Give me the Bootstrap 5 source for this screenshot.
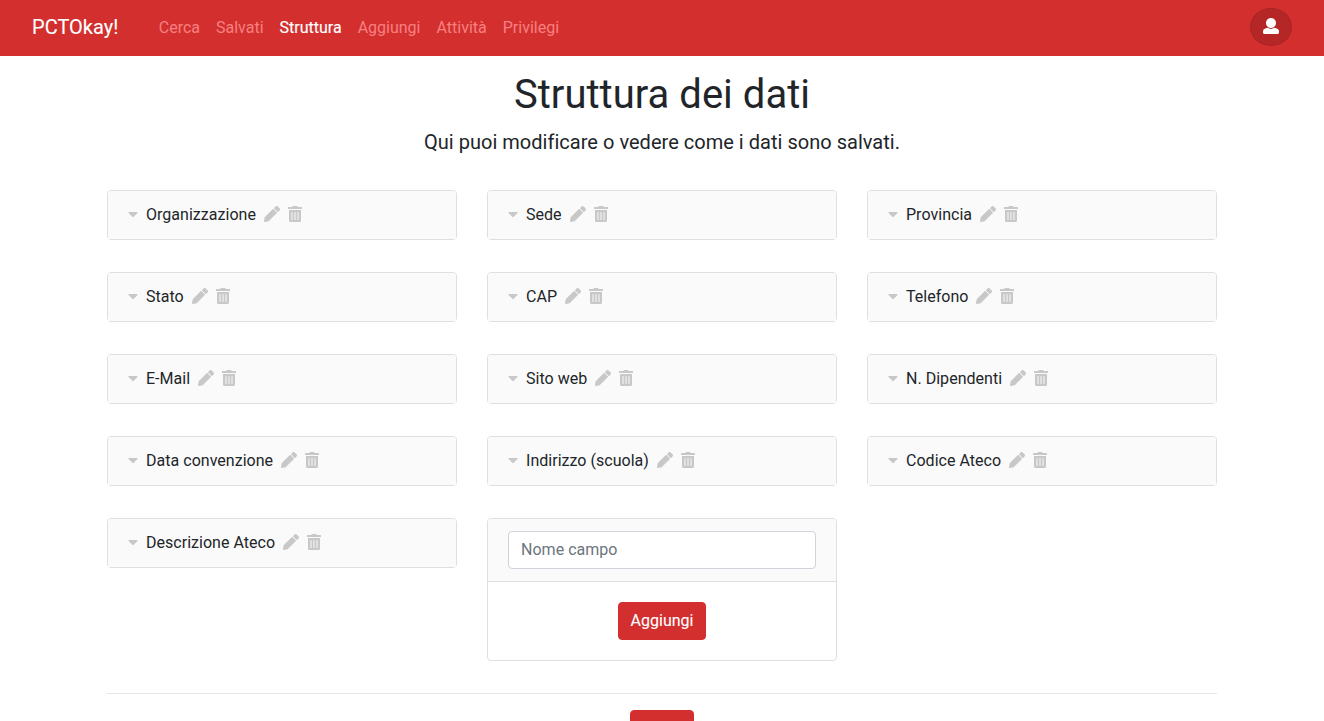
<!DOCTYPE html>
<html lang="it">
<head>
<meta charset="utf-8">
<meta name="viewport" content="width=device-width, initial-scale=1">
<title>PCTOkay! - Struttura</title>
<link href="https://cdn.jsdelivr.net/npm/bootstrap@5.3.0/dist/css/bootstrap.min.css" rel="stylesheet">
<style>
body { font-family: Roboto, sans-serif; color: #212529; letter-spacing: .025px; overflow: hidden; }
.topbar { --bs-navbar-nav-link-padding-x: .5rem; background: #d32f2f; height: 56px; }
.topbar .nav-link { color: #f88080; letter-spacing: 0; }
.topbar .nav-link.active { color: #fff; -webkit-text-stroke: .15px #fff; }
.topbar .navbar-brand { margin-right: 32.3px; padding: 4px 0 6px; -webkit-text-stroke: .1px #fff; }
.btn-red { --bs-btn-color: #fff; --bs-btn-bg: #d32f2f; --bs-btn-border-color: #d32f2f; --bs-btn-hover-color: #fff; --bs-btn-hover-bg: #b52626; --bs-btn-hover-border-color: #ab2424; --bs-btn-border-radius: 4px; -webkit-text-stroke: .1px #fff; }
.btn-user { --bs-btn-bg: #b52626; --bs-btn-border-color: #ab2424; height: 38px; padding: 5px 12px 7px; margin-top: -2px; }
.page, .page .row { --bs-gutter-x: 30px; }
.page { padding-top: 15px; }
.intro { margin-bottom: 17px; }
.field-card { --bs-card-border-color: #dfdfdf; --bs-card-border-radius: 4px; --bs-card-inner-border-radius: 3px; --bs-card-cap-bg: #fafafa; --bs-card-cap-padding-y: 12px; --bs-card-cap-padding-x: 20px; --bs-card-spacer-x: 20px; --bs-card-spacer-y: 20px; }
.field-card .card-header:last-child { border-bottom: 0; }
.field-card .form-control { border-color: #ced4da; border-radius: 4px; letter-spacing: inherit; }
.field-card .form-control::placeholder { color: #6c757d; opacity: 1; }
.fa { height: 16px; fill: currentColor; display: block; flex: none; }
.soft { color: #c8c8c8; margin-bottom: 2px; }
.divider { border-top: 1px solid #e5e5e5; opacity: 1; }
</style>
</head>
<body>
<svg class="d-none" aria-hidden="true">
<symbol id="caret" viewBox="0 0 320 512"><path d="M31.3 192h257.3c17.8 0 26.7 21.5 14.1 34.1L174.1 354.7c-7.8 7.8-20.5 7.8-28.3 0L17.2 226.1C4.6 213.5 13.5 192 31.3 192z"/></symbol>
<symbol id="pencil" viewBox="0 0 512 512"><path d="M497.9 142.1l-46.1 46.1c-4.7 4.7-12.3 4.7-17 0l-111-111c-4.7-4.7-4.7-12.3 0-17l46.1-46.1c18.7-18.7 49.1-18.7 67.9 0l60.1 60.1c18.8 18.7 18.8 49.1 0 67.9zM284.2 99.8L21.6 362.4.4 483.9c-2.9 16.4 11.4 30.6 27.8 27.8l121.5-21.3 262.6-262.6c4.7-4.7 4.7-12.3 0-17l-111-111c-4.8-4.7-12.4-4.7-17.1 0z"/></symbol>
<symbol id="trash" viewBox="0 0 448 512"><path d="M32 464a48 48 0 0 0 48 48h288a48 48 0 0 0 48-48V128H32zm272-256a16 16 0 0 1 32 0v224a16 16 0 0 1-32 0zm-96 0a16 16 0 0 1 32 0v224a16 16 0 0 1-32 0zm-96 0a16 16 0 0 1 32 0v224a16 16 0 0 1-32 0zM432 32H312l-9.4-18.7A24 24 0 0 0 281.1 0H166.8a23.72 23.72 0 0 0-21.4 13.3L136 32H16A16 16 0 0 0 0 48v32a16 16 0 0 0 16 16h416a16 16 0 0 0 16-16V48a16 16 0 0 0-16-16z"/></symbol>
<symbol id="user" viewBox="0 0 512 512"><path d="M256 0c88.366 0 160 71.634 160 160s-71.634 160-160 160S96 248.366 96 160 167.634 0 256 0zm183.283 333.821l-71.313-17.828c-74.923 53.89-165.738 41.864-223.94 0l-71.313 17.828C29.981 344.505 0 382.903 0 426.955V464c0 26.51 21.49 48 48 48h416c26.51 0 48-21.49 48-48v-37.045c0-44.052-29.981-82.45-72.717-93.134z"/></symbol>
</svg>

<nav class="navbar navbar-expand topbar py-0 px-3">
  <div class="container-fluid px-3">
    <a class="navbar-brand text-white" href="#">PCTOkay!</a>
    <div class="navbar-nav me-auto">
      <a class="nav-link" href="#">Cerca</a>
      <a class="nav-link" href="#">Salvati</a>
      <a class="nav-link active" href="#">Struttura</a>
      <a class="nav-link" href="#">Aggiungi</a>
      <a class="nav-link" href="#">Attività</a>
      <a class="nav-link" href="#">Privilegi</a>
    </div>
    <button class="btn btn-red btn-user rounded-circle d-flex align-items-center" aria-label="Profilo"><svg class="fa" width="16"><use href="#user"/></svg></button>
  </div>
</nav>

<main class="container page">
  <header class="text-center">
    <h1 class="fw-normal mb-2">Struttura dei dati</h1>
    <p class="fs-5 intro">Qui puoi modificare o vedere come i dati sono salvati.</p>
  </header>
  <div class="row" id="fields">
    <div class="col-4 my-3" id="add-field">
      <div class="card field-card">
        <div class="card-header"><input class="form-control" placeholder="Nome campo"></div>
        <div class="card-body text-center"><button class="btn btn-red">Aggiungi</button></div>
      </div>
    </div>
  </div>
  <hr class="divider my-3">
  <div class="text-center"><button class="btn btn-red" aria-label="Salva" style="width:64px;height:38px"></button></div>
</main>

<script src="https://cdn.jsdelivr.net/npm/bootstrap@5.3.0/dist/js/bootstrap.bundle.min.js"></script>
<script>
const fields = ["Organizzazione", "Sede", "Provincia", "Stato", "CAP", "Telefono", "E-Mail", "Sito web", "N. Dipendenti", "Data convenzione", "Indirizzo (scuola)", "Codice Ateco", "Descrizione Ateco"];
document.getElementById("add-field").insertAdjacentHTML("beforebegin", fields.map(name => `
  <div class="col-4 my-3"><div class="card field-card"><div class="card-header d-flex align-items-center gap-2">
    <svg class="fa soft" width="10"><use href="#caret"/></svg><span>${name}</span>
    <svg class="fa soft" width="16"><use href="#pencil"/></svg><svg class="fa soft" width="14"><use href="#trash"/></svg>
  </div></div></div>`).join(""));
</script>
</body>
</html>
